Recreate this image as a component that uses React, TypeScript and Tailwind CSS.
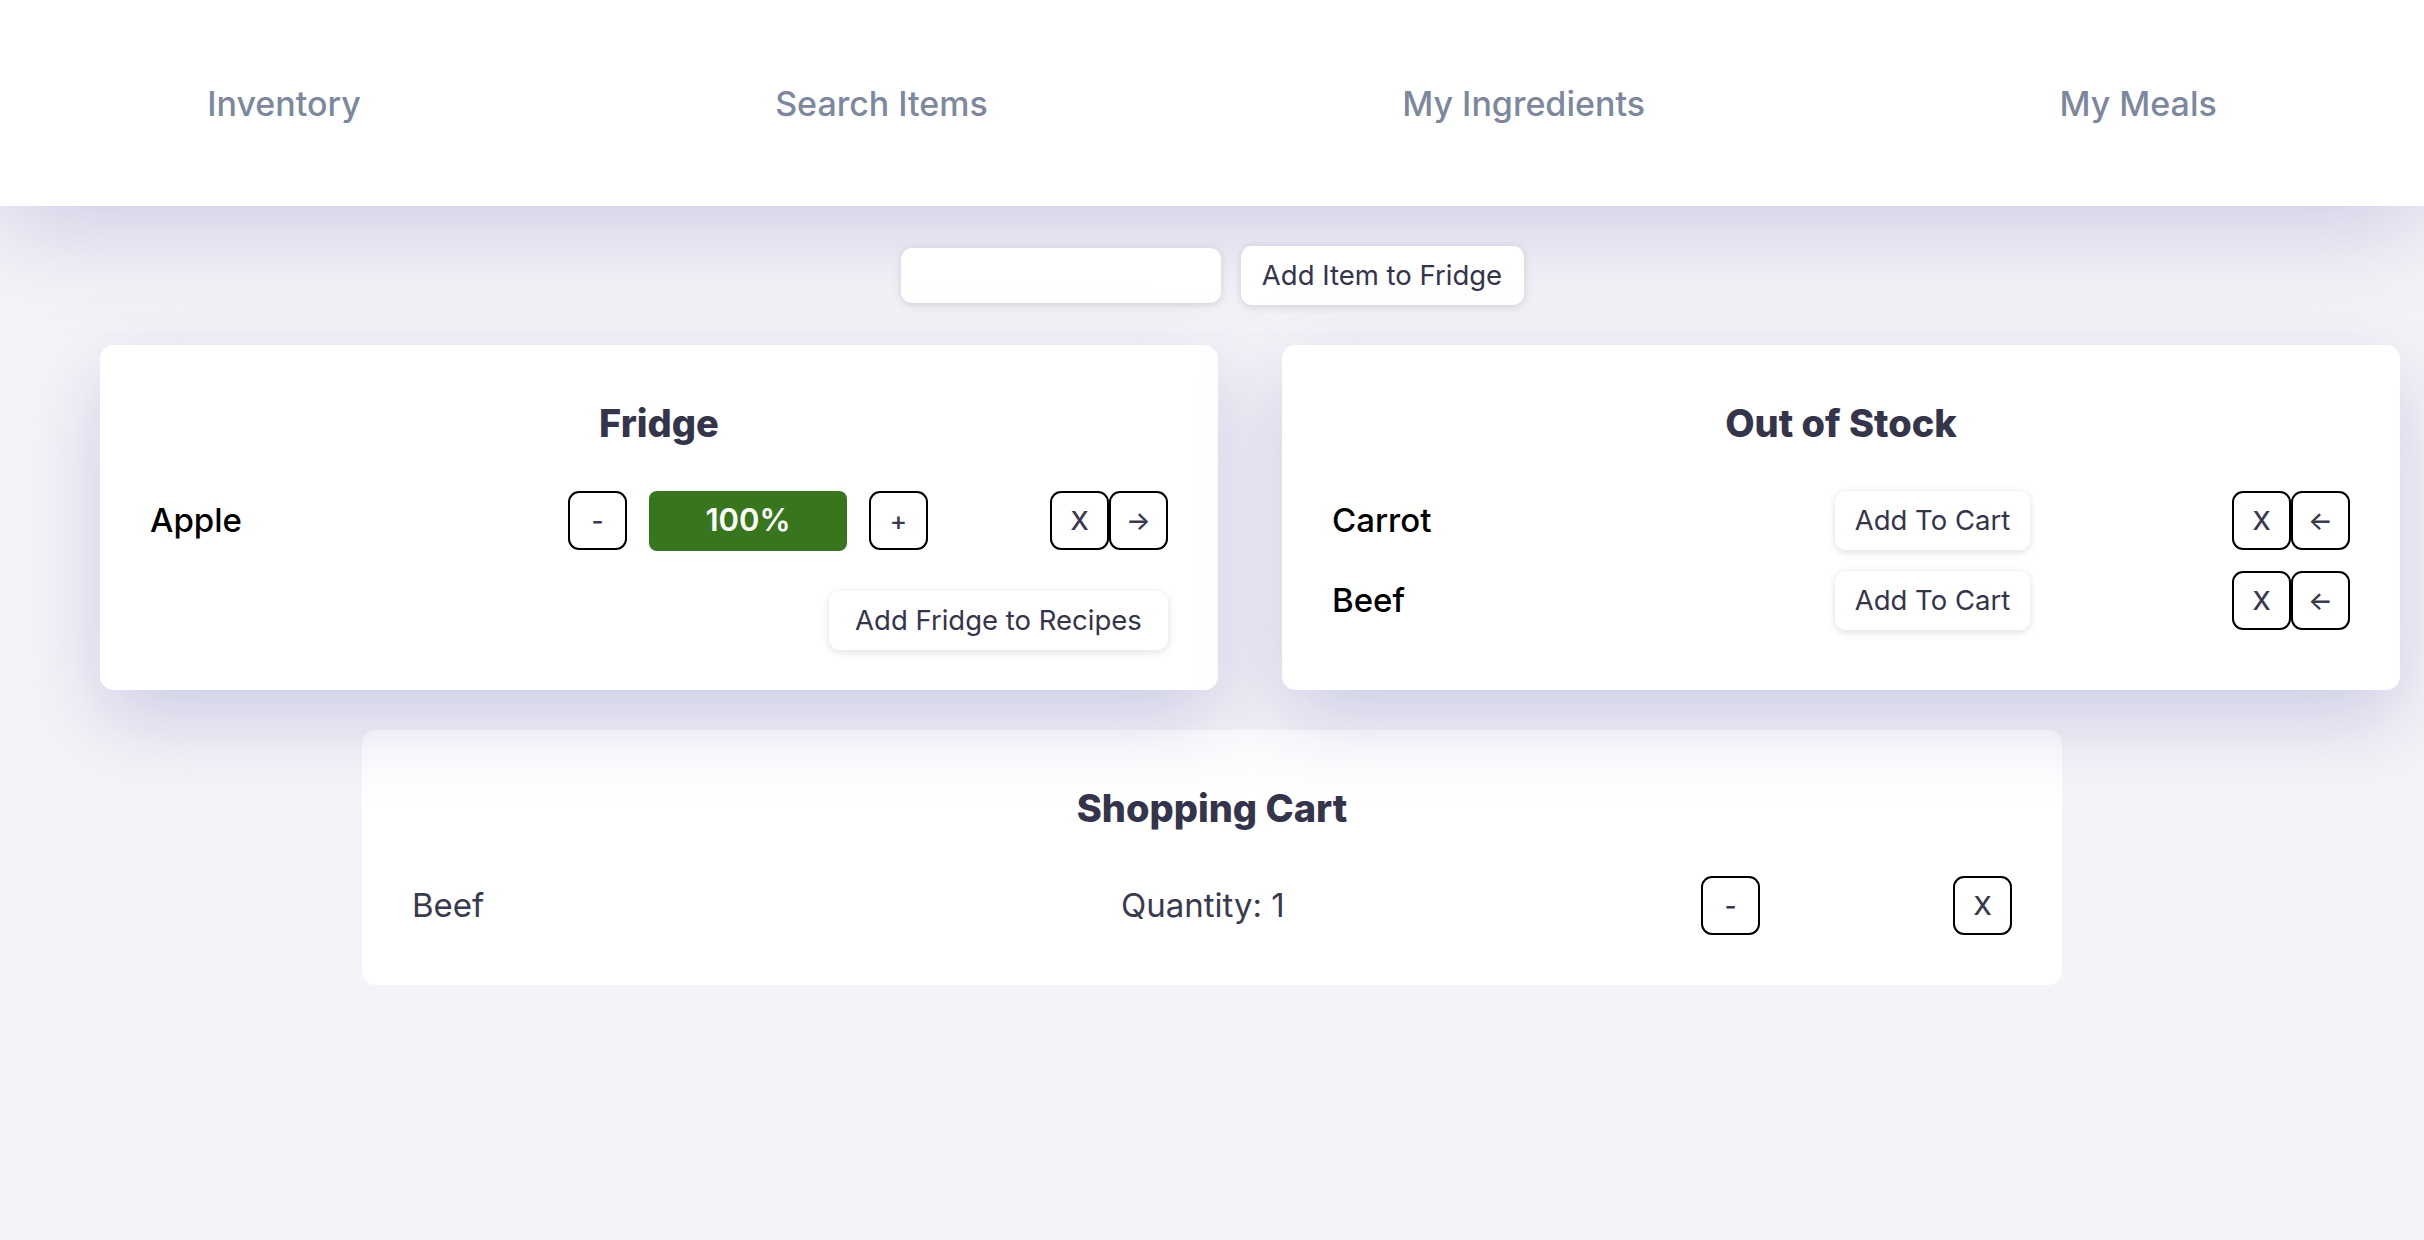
const NAV = ['Inventory', 'Search Items', 'My Ingredients', 'My Meals'];

function SquareButton({ label }: { label: string }) {
  return (
    <button className="w-[59px] h-[59px] shrink-0 rounded-[11px] border-2 border-black bg-white text-[26px] font-medium text-[#3a3a4e] flex items-center justify-center">
      {label}
    </button>
  );
}

function SoftButton({ label, width }: { label: string; width: string }) {
  return (
    <button
      className={`${width} h-[59px] shrink-0 rounded-[11px] bg-white text-[27.5px] text-[#34344a] shadow-[0_2px_8px_rgba(0,0,0,0.13)] flex items-center justify-center`}
    >
      {label}
    </button>
  );
}

function CardTitle({ children }: { children: string }) {
  return (
    <h2 className="text-center text-[38px] leading-[60px] font-extrabold text-[#34344a] mb-[38px]">{children}</h2>
  );
}

export default function App() {
  return (
    <div className="min-h-[1240px] bg-[#f4f4f8] font-['Inter',sans-serif]">
      {/* top nav */}
      <nav className="h-[206px] bg-white flex items-center justify-around shadow-[0_20px_100px_rgba(150,150,205,0.45)]">
        {NAV.map(item => (
          <a key={item} className="text-[34px] font-medium text-[#7d889e] cursor-pointer">
            {item}
          </a>
        ))}
      </nav>

      <main className="pt-[40px] pb-[60px]">
        {/* add item */}
        <div className="flex items-center justify-center gap-[20px]">
          <input className="w-[320px] h-[55px] rounded-[11px] bg-white shadow-[0_2px_8px_rgba(0,0,0,0.13)] outline-none px-4 text-[24px]" />
          <SoftButton label="Add Item to Fridge" width="w-[283px]" />
        </div>

        {/* fridge + out of stock */}
        <div className="relative z-10 mt-[40px] flex gap-[64px] pl-[100px] pr-[24px]">
          <section className="flex-1 rounded-[14px] bg-white px-[50px] pt-[48px] pb-[40px] shadow-[0_30px_80px_rgba(150,150,205,0.42)]">
            <CardTitle>Fridge</CardTitle>
            <div className="flex items-center h-[59px]">
              <span className="flex-1 text-[33px] font-medium text-black">Apple</span>
              <div className="flex items-center gap-[22px]">
                <SquareButton label="-" />
                <div className="w-[198px] h-[60px] rounded-[8px] bg-[#38761d] text-white text-[31px] font-semibold flex items-center justify-center">
                  100%
                </div>
                <SquareButton label="+" />
              </div>
              <div className="ml-[122px] flex">
                <SquareButton label="X" />
                <SquareButton label="→" />
              </div>
            </div>
            <div className="mt-[41px] flex justify-end">
              <SoftButton label="Add Fridge to Recipes" width="w-[339px]" />
            </div>
          </section>

          <section className="flex-1 rounded-[14px] bg-white px-[50px] pt-[48px] pb-[40px] shadow-[0_30px_80px_rgba(150,150,205,0.42)]">
            <CardTitle>Out of Stock</CardTitle>
            <div className="flex flex-col gap-[21px]">
              {['Carrot', 'Beef'].map(name => (
                <div key={name} className="flex items-center h-[59px]">
                  <span className="flex-1 text-[33px] font-medium text-black">{name}</span>
                  <SoftButton label="Add To Cart" width="w-[195px]" />
                  <div className="ml-[202px] flex">
                    <SquareButton label="X" />
                    <SquareButton label="←" />
                  </div>
                </div>
              ))}
            </div>
          </section>
        </div>

        {/* shopping cart */}
        <section className="mt-[40px] w-[1700px] mx-auto rounded-[14px] bg-white px-[50px] pt-[48px] pb-[50px]">
          <CardTitle>Shopping Cart</CardTitle>
          <div className="flex items-center h-[59px] text-[33px] text-[#3a3a4e]">
            <span className="w-[709px]">Beef</span>
            <span>Quantity: 1</span>
            <div className="ml-auto mr-[193px]">
              <SquareButton label="-" />
            </div>
            <SquareButton label="X" />
          </div>
        </section>
      </main>
    </div>
  );
}
